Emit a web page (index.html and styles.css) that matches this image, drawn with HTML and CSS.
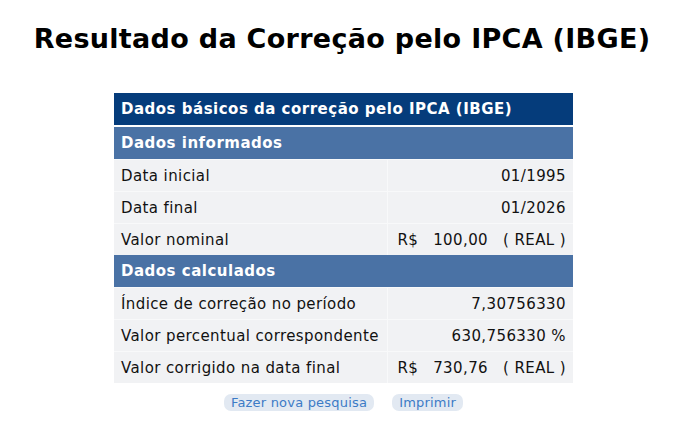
FILE: index.html
```html
<!DOCTYPE html>
<html lang="pt-BR">
<head>
<meta charset="utf-8">
<title>Resultado da Correção pelo IPCA (IBGE)</title>
<link rel="stylesheet" href="styles.css">
</head>
<body>
<h1 class="title">Resultado da Correção pelo IPCA (IBGE)</h1>
<table class="result">
  <colgroup><col class="c-lbl"><col class="c-val"></colgroup>
  <tr><th colspan="2" class="head-main">Dados básicos da correção pelo IPCA (IBGE)</th></tr>
  <tr><th colspan="2" class="head-sec">Dados informados</th></tr>
  <tr><td class="lbl">Data inicial</td><td class="val">01/1995</td></tr>
  <tr><td class="lbl">Data final</td><td class="val">01/2026</td></tr>
  <tr><td class="lbl">Valor nominal</td><td class="val"><span class="money"><span>R$</span><span>100,00</span><span>( REAL )</span></span></td></tr>
  <tr><th colspan="2" class="head-sec">Dados calculados</th></tr>
  <tr><td class="lbl">Índice de correção no período</td><td class="val">7,30756330</td></tr>
  <tr><td class="lbl">Valor percentual correspondente</td><td class="val">630,756330 %</td></tr>
  <tr><td class="lbl">Valor corrigido na data final</td><td class="val"><span class="money"><span>R$</span><span>730,76</span><span>( REAL )</span></span></td></tr>
</table>
<div class="actions">
  <a class="btn" href="#">Fazer nova pesquisa</a>
  <a class="btn" href="#">Imprimir</a>
</div>
</body>
</html>
```
FILE: styles.css
```css
html, body {
  margin: 0;
  padding: 0;
  background: #ffffff;
  font-family: "DejaVu Sans", Verdana, sans-serif;
  color: #111;
}
.title {
  margin: 21px 0 0;
  text-align: center;
  font-size: 27px;
  line-height: 36px;
  letter-spacing: 0.3px;
  font-weight: bold;
  color: #000;
}
.result {
  margin: 36px 0 0 114px;
  width: 459px;
  table-layout: fixed;
  border-collapse: collapse;
  font-size: 15px;
  letter-spacing: 0.4px;
}
.c-lbl { width: 273px; }
.c-val { width: 186px; }
.result th {
  text-align: left;
  color: #fff;
  font-weight: bold;
  letter-spacing: 0.5px;
  padding: 0 7px;
  height: 32px;
}
.head-main {
  background: #053C7B;
  border-bottom: 2px solid #fff;
}
.head-sec {
  background: #4A72A5;
}
.result td {
  background: #F1F2F4;
  height: 31px;
  padding: 0 7px;
  border-top: 1px solid #F8F9FA;
  white-space: nowrap;
}
.result td.val {
  text-align: right;
  border-left: 1px solid #F8F9FA;
}
.money {
  display: inline-flex;
  gap: 15px;
}
.actions {
  display: flex;
  justify-content: center;
  gap: 18px;
  margin-top: 11px;
  padding-left: 3px;
}
.btn {
  background: #E2E9F2;
  color: #3C7BC6;
  text-decoration: none;
  font-size: 13px;
  letter-spacing: 0.2px;
  line-height: 17px;
  padding: 0 7px;
  border-radius: 7px;
}
```
